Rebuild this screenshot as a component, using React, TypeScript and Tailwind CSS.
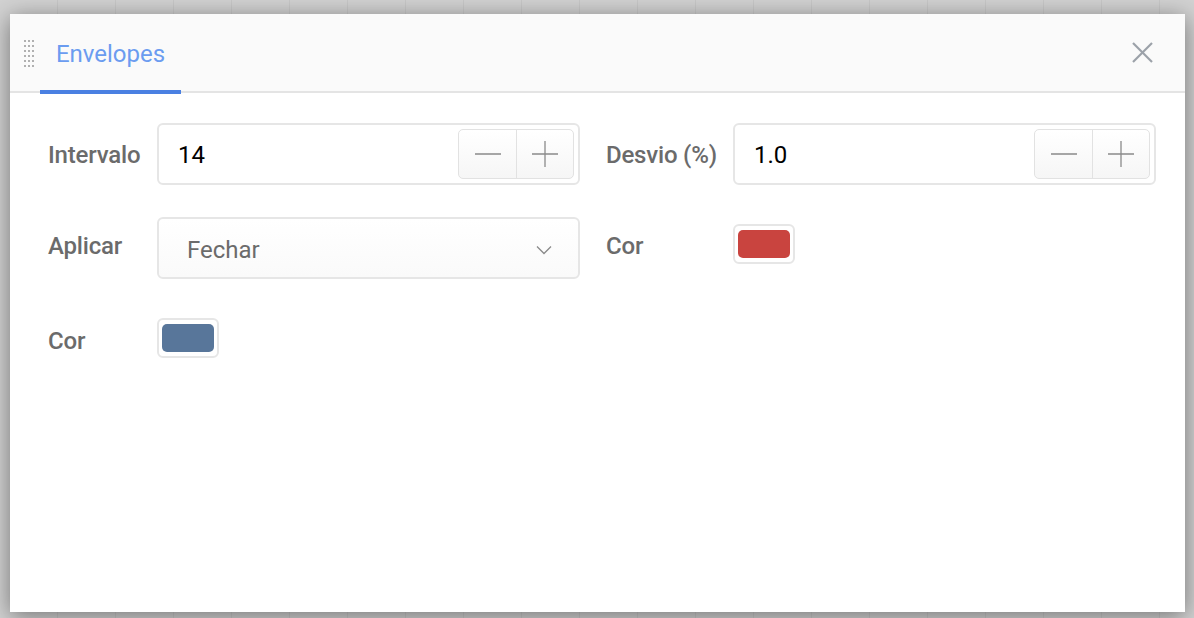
import React from "react";

const font = { fontFamily: "Roboto, 'Noto Sans', sans-serif" };

function Stepper() {
  return (
    <div className="flex h-[50px] w-[116px] rounded-[5px] border border-[#e2e2e2] bg-gradient-to-b from-white to-[#f6f6f6] overflow-hidden">
      <div className="flex w-[58px] items-center justify-center border-r border-[#e2e2e2]">
        <svg width="26" height="26" viewBox="0 0 26 26">
          <line x1="0" y1="13" x2="26" y2="13" stroke="#8a8a8a" strokeWidth="1.3" />
        </svg>
      </div>
      <div className="flex flex-1 items-center justify-center">
        <svg width="26" height="26" viewBox="0 0 26 26">
          <line x1="0" y1="13" x2="26" y2="13" stroke="#8a8a8a" strokeWidth="1.3" />
          <line x1="13" y1="0" x2="13" y2="26" stroke="#8a8a8a" strokeWidth="1.3" />
        </svg>
      </div>
    </div>
  );
}

function NumberInput({ value }: { value: string }) {
  return (
    <div className="flex h-[62px] items-center justify-between rounded-[6px] border-2 border-[#e6e6e6] bg-white pl-[19px] pr-[4px]">
      <span className="mt-[2px] text-[24px] text-black">{value}</span>
      <Stepper />
    </div>
  );
}

function Swatch({ color }: { color: string }) {
  return (
    <div className="flex h-[40px] w-[62px] items-center justify-center rounded-[6px] border-2 border-[#e6e6e6] bg-white">
      <div className="h-[28px] w-[52px] rounded-[5px]" style={{ backgroundColor: color }} />
    </div>
  );
}

function Label({ children }: { children: React.ReactNode }) {
  return <div className="text-[24px] font-medium tracking-[-0.2px] text-[#6b6b6b]">{children}</div>;
}

export default function App() {
  const dots = [];
  for (let r = 0; r < 6; r++) for (let c = 0; c < 3; c++) dots.push(<div key={`${r}-${c}`} className="h-[2px] w-[2px] bg-[#b0b0b0]" />);
  return (
    <div
      className="relative h-[618px] w-[1194px] overflow-hidden bg-[#d2d2d2] bg-[repeating-linear-gradient(90deg,transparent_0px,transparent_57px,#c8c8c8_57px,#c8c8c8_58px)] pt-[14px] pl-[10px]"
      style={font}
    >
      <div className="flex h-[598px] w-[1175px] flex-col bg-white shadow-[0_4px_22px_rgba(0,0,0,0.45)]">
        <div className="relative flex h-[79px] items-center border-b-2 border-[#e4e4e4] bg-[#fafafa]">
          <div className="ml-[14px] mt-[2px] grid grid-cols-3 gap-x-[2px] gap-y-[3px]">{dots}</div>
          <div className="relative ml-[6px] flex h-full w-[141px] items-center justify-center">
            <span className="mt-[3px] text-[24px] text-[#6b9cf0]">Envelopes</span>
            <div className="absolute -bottom-[3px] left-0 h-[4px] w-[141px] bg-[#4a80e2]" />
          </div>
          <div className="ml-auto mr-[32px]">
            <svg width="21" height="21" viewBox="0 0 21 21">
              <line x1="1" y1="1" x2="20" y2="20" stroke="#9ba1a8" strokeWidth="2.2" />
              <line x1="20" y1="1" x2="1" y2="20" stroke="#9ba1a8" strokeWidth="2.2" />
            </svg>
          </div>
        </div>
        <div className="grid grid-cols-[109px_423px_153px_423px] grid-rows-[62px_62px_62px] gap-y-[32px] pl-[38px] pt-[30px]">
          <div className="flex items-center"><div className="mt-[2px]"><Label>Intervalo</Label></div></div>
          <NumberInput value="14" />
          <div className="flex items-center pl-[26px]"><div className="mt-[2px]"><Label>Desvio (%)</Label></div></div>
          <NumberInput value="1.0" />

          <div className="flex items-center"><div className="-mt-[4px]"><Label>Aplicar</Label></div></div>
          <div className="flex h-[62px] items-center justify-between rounded-[6px] border-2 border-[#e6e6e6] bg-gradient-to-b from-white to-[#fafafa] pl-[28px] pr-[26px]">
            <span className="mt-[4px] text-[24px] text-[#6b6b6b]">Fechar</span>
            <svg width="16" height="10" viewBox="0 0 16 10" className="mt-[4px]">
              <polyline points="1,1.5 8,8.5 15,1.5" fill="none" stroke="#8a8a8a" strokeWidth="1.3" />
            </svg>
          </div>
          <div className="flex items-center pl-[26px]"><div className="-mt-[4px]"><Label>Cor</Label></div></div>
          <div className="flex items-center"><div className="-mt-[8px]"><Swatch color="#c9443f" /></div></div>

          <div className="flex items-center"><div className="-mt-[2px]"><Label>Cor</Label></div></div>
          <div className="flex items-center"><div className="-mt-[8px]"><Swatch color="#58769a" /></div></div>
        </div>
      </div>
    </div>
  );
}
